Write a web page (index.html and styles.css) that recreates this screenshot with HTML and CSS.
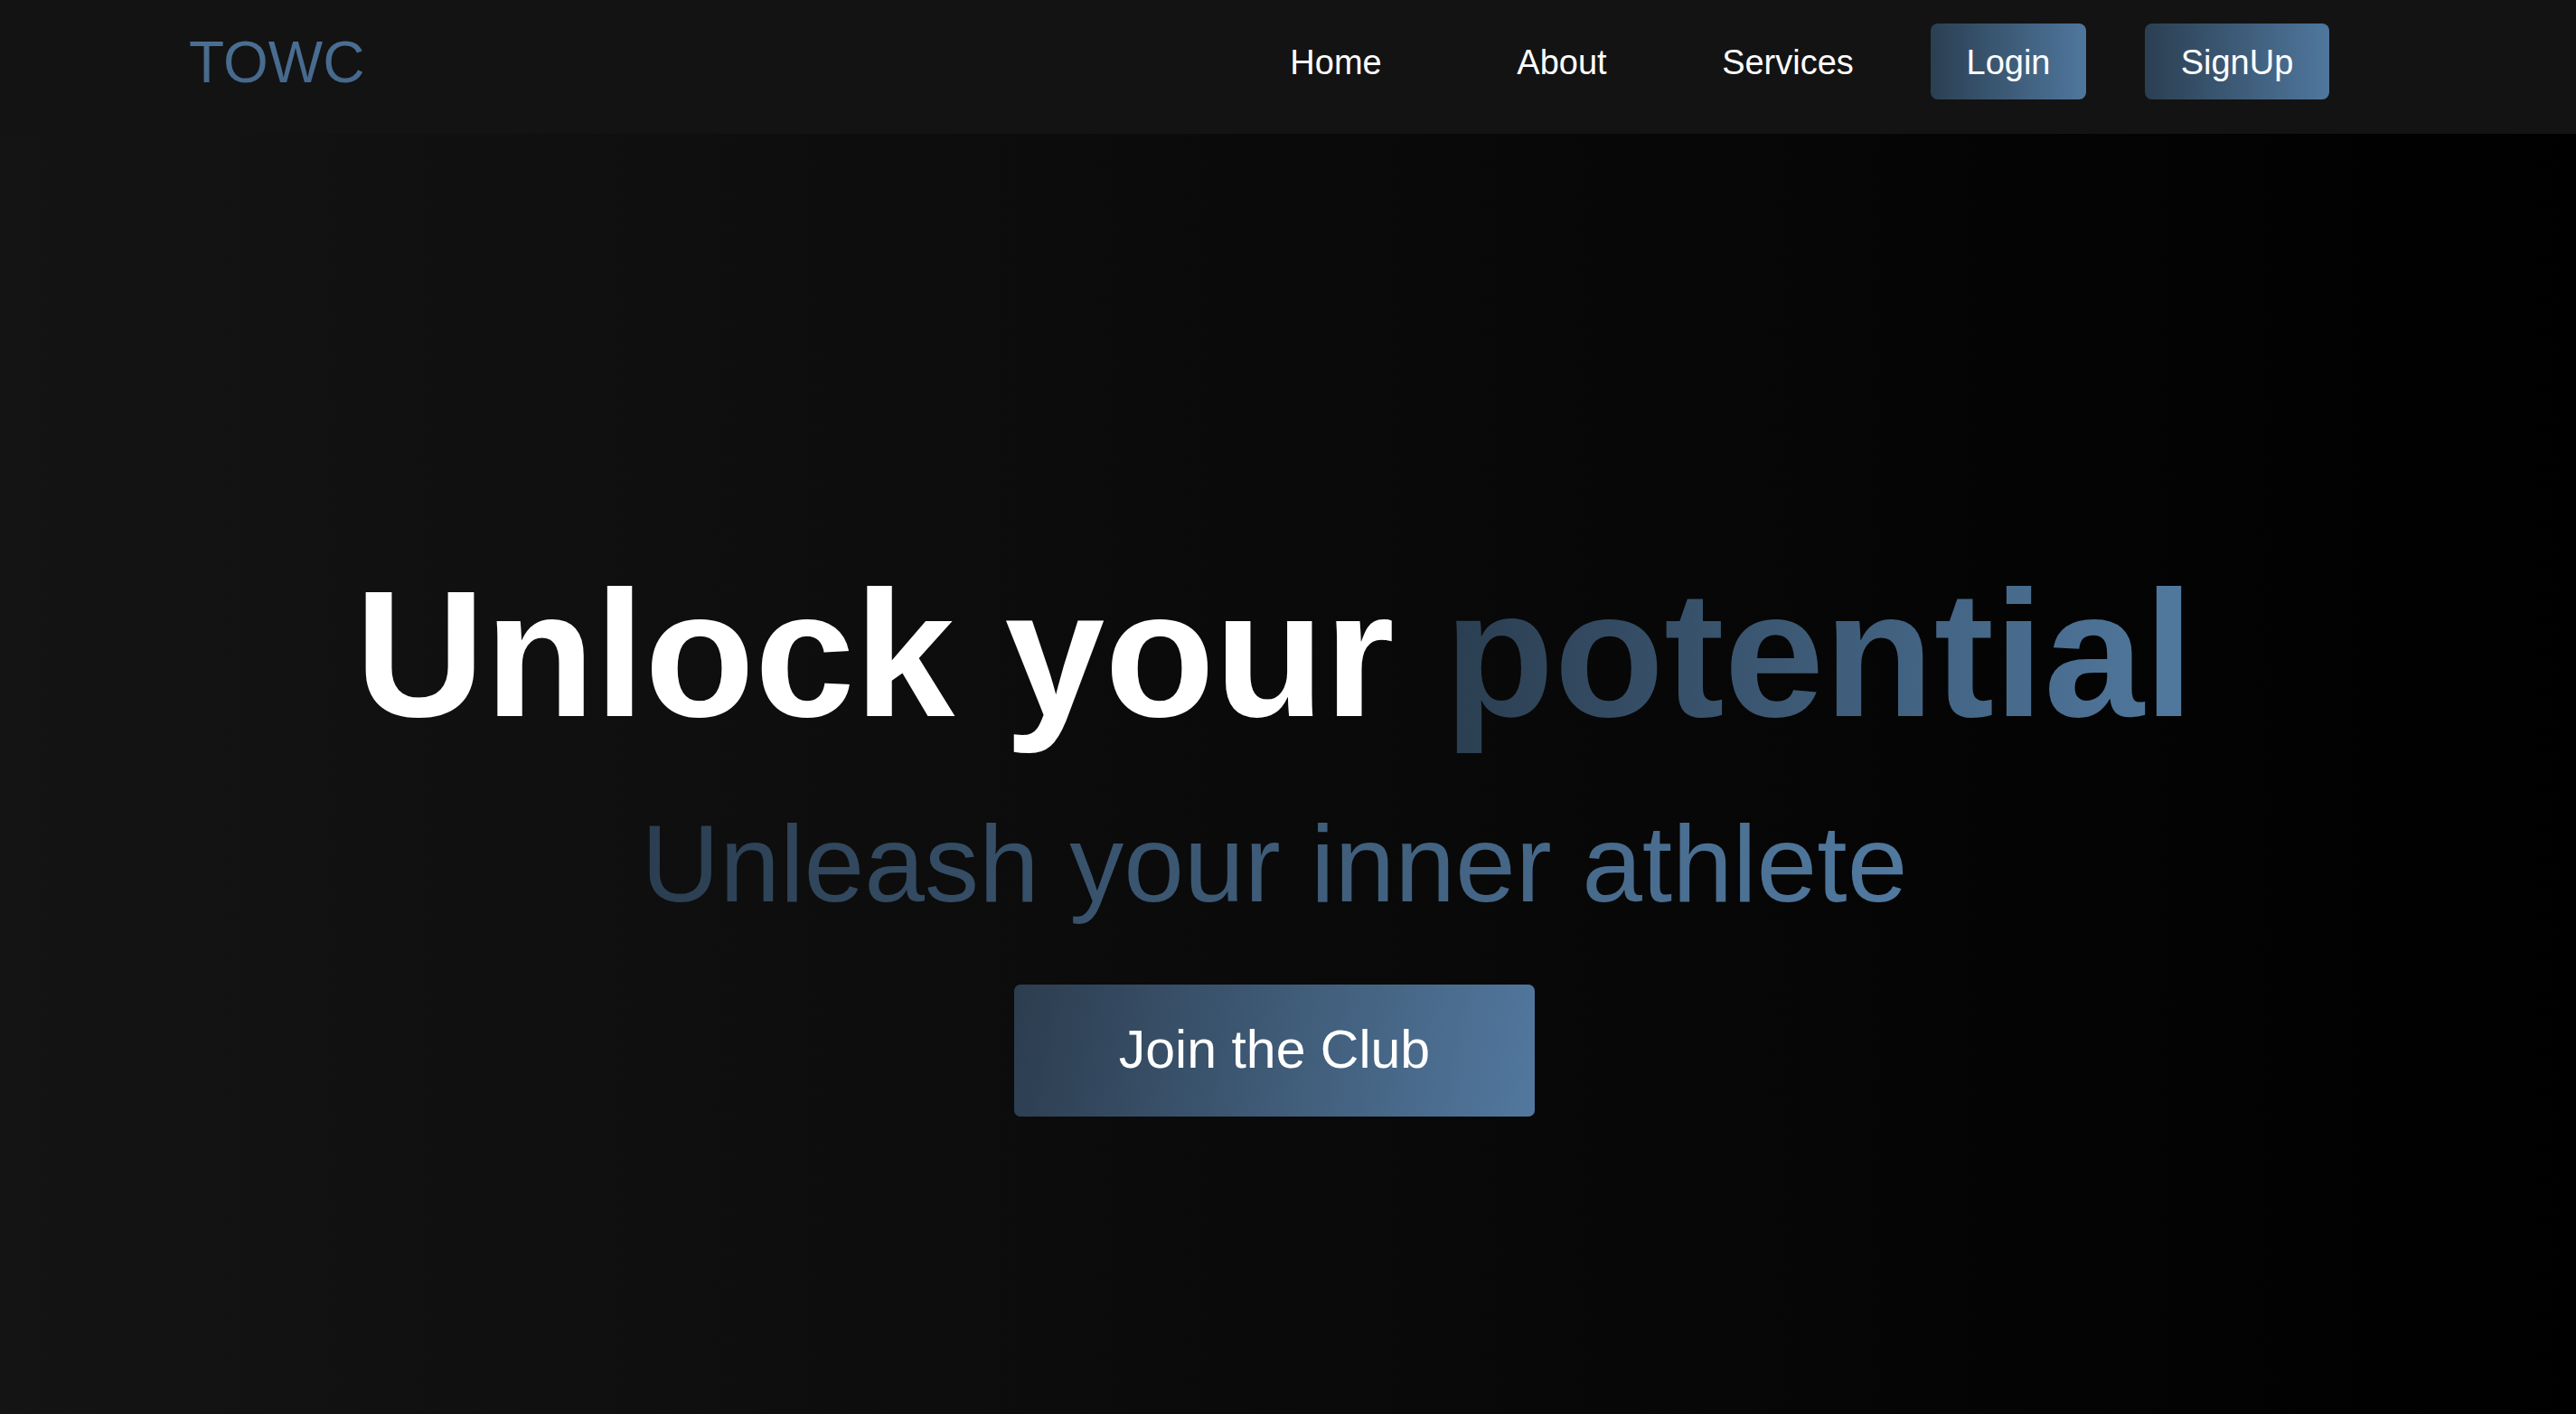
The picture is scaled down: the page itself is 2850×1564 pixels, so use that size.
FILE: index.html
```html
<!DOCTYPE html>
<html lang="en">
<head>
<meta charset="utf-8">
<title>TOWC</title>
<link rel="stylesheet" href="styles.css">
</head>
<body>
  <header class="nav">
    <div class="logo">TOWC</div>
    <ul class="menu">
      <li class="menu-item"><a class="menu-link" href="#">Home</a></li>
      <li class="menu-item"><a class="menu-link" href="#">About</a></li>
      <li class="menu-item"><a class="menu-link" href="#">Services</a></li>
      <li class="menu-item menu-item-narrow"><a class="menu-link menu-btn" href="#">Login</a></li>
      <li class="menu-item menu-item-wide"><a class="menu-link menu-btn" href="#">SignUp</a></li>
    </ul>
  </header>
  <main class="hero">
    <h1 class="title">Unlock your <span class="grad-text">potential</span></h1>
    <p class="subtitle"><span class="grad-text">Unleash your inner athlete</span></p>
    <a class="cta" href="#">Join the Club</a>
  </main>
</body>
</html>
```

FILE: styles.css
```css
* {
  box-sizing: border-box;
}

html, body {
  margin: 0;
  padding: 0;
  height: 100%;
}

body {
  font-family: "Liberation Sans", Arial, Helvetica, sans-serif;
  background: #000;
  color: #fff;
  display: flex;
  flex-direction: column;
  min-height: 1564px;
}

.nav {
  height: 148px;
  background: #131313;
  display: flex;
  align-items: flex-start;
  justify-content: space-between;
  padding: 26px 241px 0 209px;
}

.logo {
  font-size: 64px;
  line-height: 86px;
  color: #4a6c90;
  background: linear-gradient(180deg, #4d7196, #44658a);
  -webkit-background-clip: text;
  background-clip: text;
  -webkit-text-fill-color: transparent;
}

.menu {
  list-style: none;
  margin: 0;
  padding: 0;
  display: flex;
}

.menu-item {
  width: 250px;
  display: flex;
  justify-content: center;
}

.menu-item-narrow {
  width: 238px;
}

.menu-item-wide {
  width: 268px;
}

.menu-link {
  display: block;
  font-size: 38px;
  line-height: 44px;
  padding: 21px 0 19px;
  color: #fff;
  text-decoration: none;
}

.menu-btn {
  padding: 21px 40px 19px;
  border-radius: 8px;
  background: linear-gradient(to right, #2b3f52, #4f779d);
}

.hero {
  flex: 1;
  background: linear-gradient(to right, #141414, #000);
  display: flex;
  flex-direction: column;
  align-items: center;
  padding: 461px 30px 0 0;
}

.title {
  margin: 0;
  font-size: 199px;
  line-height: 1.15;
  font-weight: 700;
  white-space: nowrap;
}

.grad-text {
  background: linear-gradient(to right, #2b3e51, #51799f);
  -webkit-background-clip: text;
  background-clip: text;
  -webkit-text-fill-color: transparent;
  color: #4b6f94;
}

.subtitle {
  margin: 48px 0 0;
  font-size: 120px;
  line-height: 1.15;
  white-space: nowrap;
}

.cta {
  margin-top: 65px;
  display: block;
  font-size: 59px;
  line-height: 70px;
  padding: 37px 116px 39px;
  border-radius: 7px;
  color: #fff;
  text-decoration: none;
  background: linear-gradient(100deg, #2c3d4f, #52789e);
}
```
